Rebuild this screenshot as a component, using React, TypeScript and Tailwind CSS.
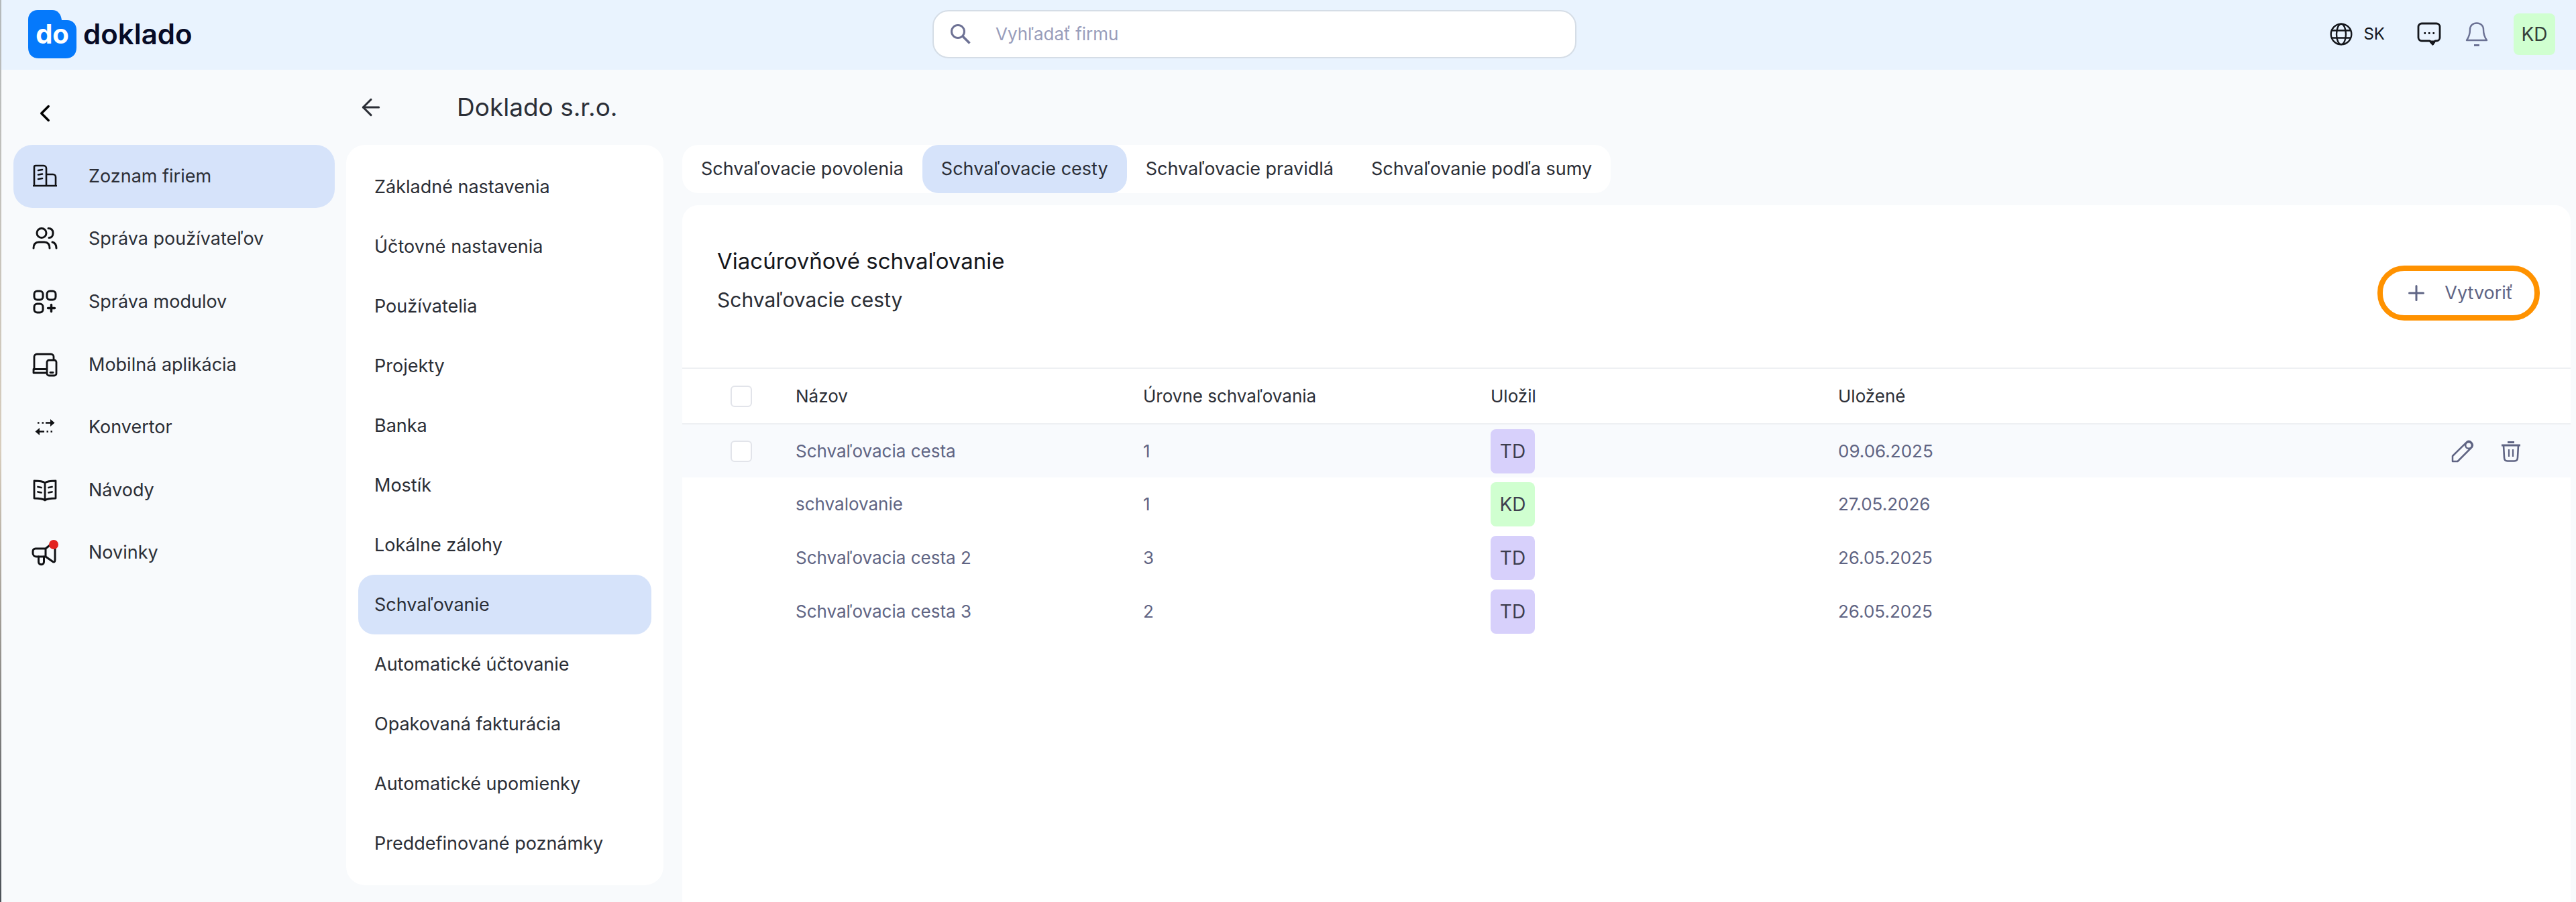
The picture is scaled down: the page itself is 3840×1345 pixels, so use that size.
import React, { useState } from 'react';
import { ArrowLeft, ChevronLeft, Plus } from 'lucide-react';

interface MenuItem {
  label: string;
  icon: React.ReactNode;
}

interface Approval {
  name: string;
  levels: number;
  savedBy: string;
  savedAt: string;
}

const BuildingIcon = () => (
  <svg viewBox="0 0 36 36" className="size-9" fill="none" stroke="currentColor" strokeWidth="2.6" strokeLinejoin="round" strokeLinecap="round">
    <path d="M2 32V4a2 2 0 0 1 2-2h12a4 4 0 0 1 4 4v26M20 15h10a4 4 0 0 1 4 4v13M1 32h34" />
    <path d="M8 9l6-1M8 15.500l6-1M8 22l6-1" />
  </svg>
);

const UsersIcon = () => (
  <svg viewBox="0 0 38 36" className="h-9 w-[38px]" fill="none" stroke="currentColor" strokeWidth="3" strokeLinecap="round">
    <circle cx="14" cy="9.500" r="7" />
    <path d="M24 2.500c5 0 7 3 7 7s-2 7-6 7" />
    <path d="M2 32c0-6 3-9 8-9h8c5 0 8 3 8 9M30 23c4 1 6 4 6 9" />
  </svg>
);

const ModulesIcon = () => (
  <svg viewBox="0 0 36 36" className="size-9" fill="none" stroke="currentColor" strokeWidth="3" strokeLinecap="round">
    <rect x="2" y="2" width="13" height="13" rx="4.500" />
    <rect x="21" y="2" width="13" height="13" rx="4.500" />
    <rect x="2" y="21" width="13" height="13" rx="4.500" />
    <path d="M27.500 22.500v10M22.500 27.500h10" strokeWidth="3.400" />
  </svg>
);

const DevicesIcon = () => (
  <svg viewBox="0 0 38 36" className="h-9 w-[38px]" fill="none" stroke="currentColor" strokeWidth="2.800" strokeLinecap="round" strokeLinejoin="round">
    <path d="M3 25V6a4 4 0 0 1 4-4h21a4 4 0 0 1 4 4v4" />
    <path d="M20 24.500H2V30h18" />
    <rect x="22" y="11" width="14" height="23" rx="3" />
    <path d="M27 29.500h4" />
  </svg>
);

const ConvertIcon = () => (
  <svg viewBox="0 0 36 36" className="size-9" fill="none" stroke="currentColor" strokeWidth="2.600">
    <path d="M7 11.500h2.500M13.500 11.500H16M19 11.500h9M29 24.500h-2.500M23 24.500h-2.500M17 24.500H8" />
    <path d="M26 6v11l6.500-5.500zM10 19v11l-6.500-5.500z" fill="currentColor" stroke="none" />
  </svg>
);

const GuideIcon = () => (
  <svg viewBox="0 0 36 36" className="size-9" fill="none" stroke="currentColor" strokeWidth="2.800" strokeLinejoin="round" strokeLinecap="round">
    <path d="M18 7c-4-3-10-3-16-3v26c6 0 12 0 16 3 4-3 10-3 16-3V4c-6 0-12 0-16 3zM18 7v26" />
    <path d="M7.500 13l5 1M7.500 20.500l5 1M28.500 13l-5 1M28.500 20.500l-5 1" />
  </svg>
);

const NewsIcon = () => (
  <svg viewBox="0 0 40 40" className="size-10" fill="none" stroke="currentColor" strokeWidth="3" strokeLinejoin="round" strokeLinecap="round">
    <path d="M21 14H6a4 4 0 0 0-4 4v3a5 5 0 0 0 5 5h14zM21 14l10-8c3-2 4-1 4 2v23c0 3-2 4-4 2l-10-7" />
    <path d="M10.500 26v8c0 5 8 5 8 0v-8" />
    <circle cx="33" cy="8" r="7" fill="#e2231f" stroke="none" />
  </svg>
);

const SearchIcon = () => (
  <svg viewBox="0 0 32 32" className="size-8 shrink-0" fill="none" stroke="#6d7194" strokeWidth="3">
    <circle cx="12" cy="12" r="9.500" />
    <path d="M19 19l10.500 10.500" strokeWidth="3.600" />
  </svg>
);

const GlobeIcon = () => (
  <svg viewBox="0 0 34 34" className="size-[34px]" fill="none" stroke="currentColor" strokeWidth="2.400">
    <circle cx="17" cy="17" r="15.300" />
    <ellipse cx="17" cy="17" rx="7" ry="15.300" />
    <path d="M3 11.500h28M3 22.500h28" />
  </svg>
);

const ChatIcon = () => (
  <svg viewBox="0 0 36 36" className="size-9" fill="none" stroke="currentColor" strokeWidth="2.800" strokeLinejoin="round">
    <path d="M7 2h22a5 5 0 0 1 5 5v16a5 5 0 0 1-5 5h-2l-3.500 5-4.500-5H7a5 5 0 0 1-5-5V7a5 5 0 0 1 5-5z" />
    <path d="M20 29l3.500 4 2.500-4z" fill="currentColor" />
    <path d="M10.500 16.500h2.500M17 16.500h2.500M23.500 16.500H26" />
  </svg>
);

const BellIcon = () => (
  <svg viewBox="0 0 34 36" className="h-9 w-[34px]" fill="none" stroke="#6b7194" strokeWidth="2.400" strokeLinejoin="round">
    <path d="M17 1.500c-6 0-10 4-10 9.500 0 7-1.500 11-5 16h30c-3.500-5-5-9-5-16 0-5.500-4-9.500-10-9.500z" />
    <path d="M13 34.500h8" strokeWidth="3" />
  </svg>
);

const PencilIcon = () => (
  <svg viewBox="0 0 34 34" className="size-[34px]" fill="none" stroke="currentColor" strokeWidth="2.500" strokeLinejoin="round">
    <path d="M2 32v-8L23.500 2.800c4.500-3 10.500 3 7.500 7.700L9.500 32z" />
    <circle cx="26" cy="8" r="4.800" />
  </svg>
);

const TrashIcon = () => (
  <svg viewBox="0 0 30 32" className="h-8 w-[30px]" fill="none" stroke="currentColor" strokeWidth="2.600">
    <path d="M1 7h28M10 2.500h10" strokeWidth="3" />
    <path d="M4 7l1 18c0 4 2 5.500 5 5.500h10c3 0 5-1.500 5-5.500l1-18" />
    <path d="M12 13v11M18 13v11" strokeWidth="2.200" />
  </svg>
);

const menu: MenuItem[] = [
  { label: 'Zoznam firiem', icon: <BuildingIcon /> },
  { label: 'Správa používateľov', icon: <UsersIcon /> },
  { label: 'Správa modulov', icon: <ModulesIcon /> },
  { label: 'Mobilná aplikácia', icon: <DevicesIcon /> },
  { label: 'Konvertor', icon: <ConvertIcon /> },
  { label: 'Návody', icon: <GuideIcon /> },
  { label: 'Novinky', icon: <NewsIcon /> },
];

const settings = [
  'Základné nastavenia',
  'Účtovné nastavenia',
  'Používatelia',
  'Projekty',
  'Banka',
  'Mostík',
  'Lokálne zálohy',
  'Schvaľovanie',
  'Automatické účtovanie',
  'Opakovaná fakturácia',
  'Automatické upomienky',
  'Preddefinované poznámky',
];

const tabs = [
  'Schvaľovacie povolenia',
  'Schvaľovacie cesty',
  'Schvaľovacie pravidlá',
  'Schvaľovanie podľa sumy',
];

const approvals: Approval[] = [
  { name: 'Schvaľovacia cesta', levels: 1, savedBy: 'TD', savedAt: '09.06.2025' },
  { name: 'schvalovanie', levels: 1, savedBy: 'KD', savedAt: '27.05.2026' },
  { name: 'Schvaľovacia cesta 2', levels: 3, savedBy: 'TD', savedAt: '26.05.2025' },
  { name: 'Schvaľovacia cesta 3', levels: 2, savedBy: 'TD', savedAt: '26.05.2025' },
];

const checkboxClass =
  'block size-8 appearance-none rounded-md border-2 border-[#e2e4ea] bg-white checked:bg-[#0b78f9]';

const App: React.FC = () => {
  const [activeTab, setActiveTab] = useState('Schvaľovacie cesty');

  return (
    <div className="relative flex min-h-screen flex-col bg-[#f8fafc] font-['Inter',sans-serif] text-[26px] leading-8 text-[#2b2e36]">
      {/* Window edge */}
      <div className="absolute inset-y-0 left-0 w-[2px] bg-linear-to-b from-[#b4b9bb] via-[#d8cdbd] to-[#4c5158]"></div>

      {/* Header */}
      <header className="flex h-[104px] items-center justify-between bg-[#e9f3fe] pr-[31px] pb-[2px] pl-[42px]">
        <a href="#" className="flex items-center gap-[10px]">
          <span className="relative flex size-[72px] items-center justify-center">
            <svg viewBox="0 0 72 72" className="absolute inset-0 size-full" fill="#0579fb">
              <path d="M14 0h22c8 0 13 6 14 15h8c8 0 14 6 14 14v27c0 10-6 16-16 16H16C6 72 0 66 0 56V14C0 6 6 0 14 0z" />
            </svg>
            <span className="relative text-[40px] leading-10 font-bold text-white">do</span>
          </span>
          <span className="text-[42px] leading-10 font-semibold text-[#070b26]">doklado</span>
        </a>

        <label className="flex h-[72px] w-[960px] items-center gap-9 rounded-3xl border-2 border-[#d5dde6] bg-white px-6">
          <SearchIcon />
          <input
            type="search"
            aria-label="Vyhľadať firmu"
            placeholder="Vyhľadať firmu"
            className="min-w-0 flex-1 bg-transparent outline-none placeholder:text-[#989dbb]"
          />
        </label>

        <div className="flex items-center pl-5 text-[#15171c]">
          <button className="flex items-center gap-4 text-2xl">
            <GlobeIcon />
            SK
          </button>
          <button aria-label="Správy" className="ml-12">
            <ChatIcon />
          </button>
          <button aria-label="Upozornenia" className="ml-9">
            <BellIcon />
          </button>
          <button className="ml-[38px] flex size-[62px] items-center justify-center rounded-lg bg-[#d0ffd0] text-[28px] text-[#35403a]">
            KD
          </button>
        </div>
      </header>

      <div className="flex flex-1">
        {/* Main menu */}
        <aside className="w-[516px] shrink-0 pr-[17px] pl-5">
          <div className="flex h-[112px] items-center pt-[18px] pl-[26px]">
            <button aria-label="Zbaliť menu" className="text-black">
              <ChevronLeft size={42} strokeWidth={2} />
            </button>
          </div>
          <nav className="flex h-[655px] flex-col text-[27px]">
            {menu.map((item, index) => (
              <a
                key={item.label}
                href="#"
                className={`flex flex-1 items-center rounded-[28px] pl-6 ${index === 0 ? 'bg-[#d6e3fa]' : ''}`}
              >
                <span className="flex w-[88px] items-center">
                  <span className="flex w-[46px] justify-center text-[#101114]">{item.icon}</span>
                </span>
                {item.label}
              </a>
            ))}
          </nav>
        </aside>

        <div className="flex flex-1 flex-col">
          <div className="flex h-[112px] items-center gap-[108px] pl-[17px]">
            <button aria-label="Späť">
              <ArrowLeft size={40} strokeWidth={1.8} />
            </button>
            <h1 className="text-[37px]">Doklado s.r.o.</h1>
          </div>

          <div className="flex flex-1 gap-7">
            {/* Company settings */}
            <nav className="flex w-[473px] shrink-0 flex-col self-start rounded-[28px] bg-white p-[18px] text-[27px]">
              {settings.map((item) => (
                <a
                  key={item}
                  href="#"
                  className={`flex h-[89px] items-center rounded-3xl px-6 whitespace-nowrap ${
                    item === 'Schvaľovanie' ? 'bg-[#d6e3fa]' : ''
                  }`}
                >
                  {item}
                </a>
              ))}
            </nav>

            <main className="flex flex-1 flex-col pr-2">
              <div className="mb-[18px] flex self-start rounded-3xl bg-white text-[27px]">
                {tabs.map((tab) => (
                  <button
                    key={tab}
                    onClick={() => setActiveTab(tab)}
                    className={`h-[72px] rounded-3xl px-7 ${tab === activeTab ? 'bg-[#d6e3fa]' : ''}`}
                  >
                    {tab}
                  </button>
                ))}
              </div>

              <section className="flex-1 rounded-t-3xl bg-white">
                <div className="flex h-[242px] items-center justify-between pr-[46px] pl-[52px]">
                  <div className="flex flex-col gap-5 pb-5">
                    <h2 className="text-[33px] leading-10 text-[#15171c]">Viacúrovňové schvaľovanie</h2>
                    <p className="text-[30px] leading-9">Schvaľovacie cesty</p>
                  </div>
                  <div className="mt-5 rounded-[40px] border-8 border-[#ff9200]">
                    <button className="flex h-[66px] items-center gap-6 rounded-[32px] px-8 text-[27px] text-[#5f6585]">
                      <Plus size={36} strokeWidth={2} />
                      Vytvoriť
                    </button>
                  </div>
                </div>

                <table className="w-full table-fixed border-collapse text-left">
                  <thead>
                    <tr className="h-[83px] border-y-2 border-[#eef0f3]">
                      <th className="w-[169px] pl-[72px]">
                        <input type="checkbox" aria-label="Vybrať všetko" className={checkboxClass} />
                      </th>
                      <th className="font-normal">Názov</th>
                      <th className="font-normal">Úrovne schvaľovania</th>
                      <th className="font-normal">Uložil</th>
                      <th className="font-normal">Uložené</th>
                      <th className="w-[574px]"></th>
                    </tr>
                  </thead>
                  <tbody className="text-[#5f6483]">
                    {approvals.map((row, index) => (
                      <tr key={row.name} className={`h-20 ${index === 0 ? 'bg-[#f8fafd]' : ''}`}>
                        <td className="pl-[72px]">
                          {index === 0 && (
                            <input type="checkbox" aria-label={row.name} className={checkboxClass} />
                          )}
                        </td>
                        <td>{row.name}</td>
                        <td>{row.levels}</td>
                        <td>
                          <span
                            className={`flex size-[66px] items-center justify-center rounded-lg text-[28px] text-[#3d3d4d] ${
                              row.savedBy === 'KD' ? 'bg-[#d0ffd0]' : 'bg-[#d7d0fb]'
                            }`}
                          >
                            {row.savedBy}
                          </span>
                        </td>
                        <td>{row.savedAt}</td>
                        <td className="pr-[74px]">
                          {index === 0 && (
                            <div className="flex items-center justify-end gap-10">
                              <button aria-label="Upraviť">
                                <PencilIcon />
                              </button>
                              <button aria-label="Odstrániť">
                                <TrashIcon />
                              </button>
                            </div>
                          )}
                        </td>
                      </tr>
                    ))}
                  </tbody>
                </table>
              </section>
            </main>
          </div>
        </div>
      </div>
    </div>
  );
};

export default App;
